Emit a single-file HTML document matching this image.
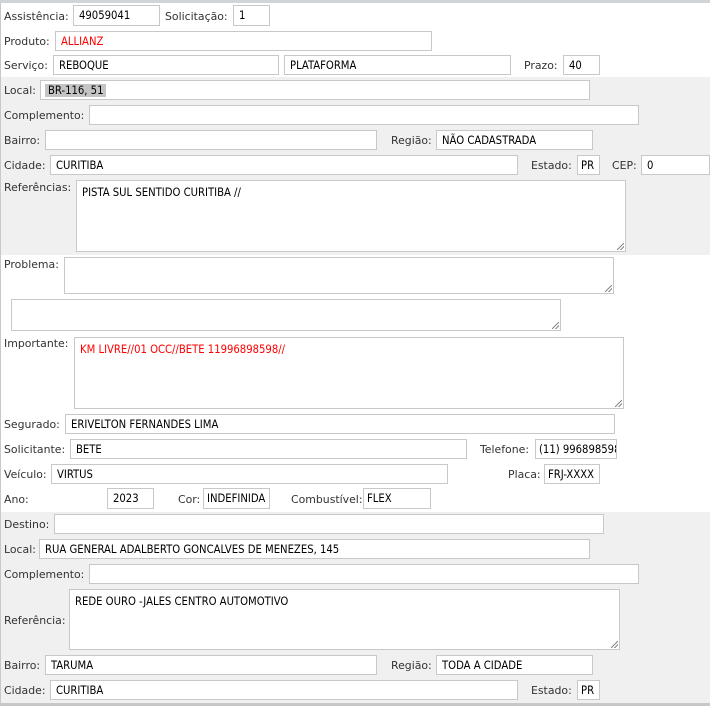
<!DOCTYPE html>
<html><head><meta charset="utf-8"><style>
body{margin:0;width:710px;height:706px;position:relative;overflow:hidden;background:#fff;font-family:"DejaVu Sans","Liberation Sans",sans-serif;}
.g{position:absolute;left:0;width:710px;background:#f0f0f0;}
.l{position:absolute;font-size:10.9px;color:#333;line-height:14px;white-space:nowrap;}
.i{position:absolute;box-sizing:border-box;border:1px solid #c8c8c8;background:#fff;font-size:11.2px;color:#000;padding:0 5px;line-height:19px;white-space:nowrap;overflow:hidden;font-family:"DejaVu Sans Condensed","DejaVu Sans",sans-serif;}
.t{line-height:15px;padding-top:4px;}
.t:after{content:"";position:absolute;right:1px;bottom:1px;width:7px;height:7px;background:linear-gradient(135deg,transparent 45%,#888 46%,#888 54%,transparent 55%,transparent 70%,#888 71%,#888 79%,transparent 80%);}
.r{color:#f00;}
</style></head><body>
<div style="position:absolute;left:0;top:0;width:710px;height:3px;background:#d0d4d8"></div>
<div class="g" style="top:77px;height:178px"></div>
<div class="g" style="top:512px;height:191px"></div>
<div style="position:absolute;left:0;top:703px;width:710px;height:3px;background:#c8c8c8"></div>
<div style="position:absolute;left:0;top:3px;width:1px;height:700px;background:#c8c8c8"></div>

<div class="l" style="left:4px;top:10px">Assistência:</div><div class="i" style="left:73px;top:5px;width:87px;height:21px">49059041</div>
<div class="l" style="left:165px;top:10px">Solicitação:</div><div class="i" style="left:233px;top:5px;width:37px;height:21px">1</div>
<div class="l" style="left:4px;top:35px">Produto:</div><div class="i r" style="left:55px;top:31px;width:377px;height:20px">ALLIANZ</div>
<div class="l" style="left:4px;top:59px">Serviço:</div><div class="i" style="left:53px;top:55px;width:226px;height:20px">REBOQUE</div>
<div class="i" style="left:284px;top:55px;width:227px;height:20px">PLATAFORMA</div>
<div class="l" style="left:524px;top:59px">Prazo:</div><div class="i" style="left:563px;top:55px;width:37px;height:20px">40</div>

<div class="l" style="left:4px;top:84px">Local:</div><div class="i" style="left:40px;top:80px;width:550px;height:20px;padding-left:4px"><span style="background:#c4c4c4;padding:0 3px">BR-116, 51</span></div>
<div class="l" style="left:4px;top:109px">Complemento:</div><div class="i" style="left:89px;top:105px;width:550px;height:20px"></div>
<div class="l" style="left:4px;top:134px">Bairro:</div><div class="i" style="left:45px;top:130px;width:332px;height:20px"></div>
<div class="l" style="left:391px;top:134px">Região:</div><div class="i" style="left:436px;top:130px;width:157px;height:20px">NÃO CADASTRADA</div>
<div class="l" style="left:4px;top:159px">Cidade:</div><div class="i" style="left:50px;top:155px;width:468px;height:20px">CURITIBA</div>
<div class="l" style="left:531px;top:159px">Estado:</div><div class="i" style="left:577px;top:155px;width:23px;height:20px;padding:0 3px">PR</div>
<div class="l" style="left:612px;top:159px">CEP:</div><div class="i" style="left:641px;top:155px;width:69px;height:20px">0</div>
<div class="l" style="left:4px;top:181px">Referências:</div><div class="i t" style="left:76px;top:180px;width:550px;height:72px">PISTA SUL SENTIDO CURITIBA //</div>

<div class="l" style="left:4px;top:258px">Problema:</div><div class="i t" style="left:64px;top:257px;width:550px;height:37px"></div>
<div class="i t" style="left:11px;top:299px;width:550px;height:32px"></div>
<div class="l" style="left:4px;top:337px">Importante:</div><div class="i t r" style="left:74px;top:337px;width:550px;height:72px">KM LIVRE//01 OCC//BETE 11996898598//</div>

<div class="l" style="left:4px;top:418px">Segurado:</div><div class="i" style="left:65px;top:414px;width:550px;height:20px">ERIVELTON FERNANDES LIMA</div>
<div class="l" style="left:4px;top:443px">Solicitante:</div><div class="i" style="left:70px;top:439px;width:397px;height:20px">BETE</div>
<div class="l" style="left:480px;top:443px">Telefone:</div><div class="i" style="left:535px;top:439px;width:82px;height:20px;padding:0 3px">(11) 996898598</div>
<div class="l" style="left:4px;top:468px">Veículo:</div><div class="i" style="left:51px;top:464px;width:397px;height:20px">VIRTUS</div>
<div class="l" style="left:508px;top:468px">Placa:</div><div class="i" style="left:544px;top:464px;width:56px;height:20px;padding:0 3px">FRJ-XXXX</div>
<div class="l" style="left:4px;top:493px">Ano:</div><div class="i" style="left:107px;top:488px;width:47px;height:21px">2023</div>
<div class="l" style="left:178px;top:493px">Cor:</div><div class="i" style="left:203px;top:488px;width:67px;height:21px;padding:0 3px">INDEFINIDA</div>
<div class="l" style="left:291px;top:493px">Combustível:</div><div class="i" style="left:363px;top:488px;width:68px;height:21px;padding:0 3px">FLEX</div>

<div class="l" style="left:4px;top:518px">Destino:</div><div class="i" style="left:54px;top:514px;width:550px;height:20px"></div>
<div class="l" style="left:4px;top:543px">Local:</div><div class="i" style="left:39px;top:539px;width:551px;height:20px">RUA GENERAL ADALBERTO GONCALVES DE MENEZES, 145</div>
<div class="l" style="left:4px;top:568px">Complemento:</div><div class="i" style="left:89px;top:564px;width:550px;height:20px"></div>
<div class="l" style="left:4px;top:614px">Referência:</div><div class="i t" style="left:69px;top:589px;width:551px;height:61px">REDE OURO -JALES CENTRO AUTOMOTIVO</div>
<div class="l" style="left:4px;top:659px">Bairro:</div><div class="i" style="left:45px;top:655px;width:332px;height:20px">TARUMA</div>
<div class="l" style="left:391px;top:659px">Região:</div><div class="i" style="left:436px;top:655px;width:157px;height:20px">TODA A CIDADE</div>
<div class="l" style="left:4px;top:684px">Cidade:</div><div class="i" style="left:50px;top:680px;width:468px;height:20px">CURITIBA</div>
<div class="l" style="left:531px;top:684px">Estado:</div><div class="i" style="left:577px;top:680px;width:23px;height:20px;padding:0 3px">PR</div>
</body></html>
